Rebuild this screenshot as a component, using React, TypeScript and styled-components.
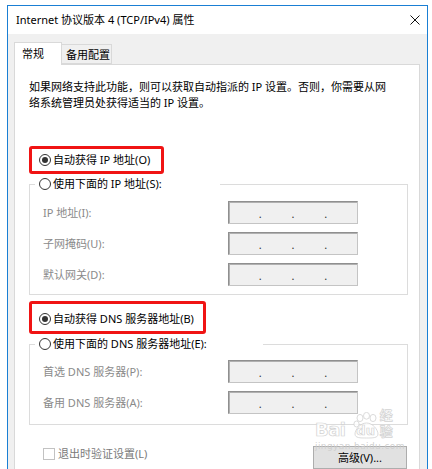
import React from "react";
import styled, { createGlobalStyle } from "styled-components";

const GlobalStyle = createGlobalStyle`
  html, body { margin: 0; padding: 0; overflow: hidden; background: #ffffff; }
  body {
    font-family: "Noto Sans", "Noto Sans CJK SC", sans-serif;
    font-size: 11px;
    color: #000;
  }
  #root { height: 469px; }
`;

const Window = styled.div`
  margin: 5px 0 0 7px;
  width: 421px;
  height: 464px;
  box-sizing: border-box;
  border: 1px solid #1a7fd4;
  border-bottom: none;
  display: flex;
  flex-direction: column;
`;

const TitleBar = styled.div`
  height: 28px;
  flex: none;
  background: #fff;
  display: flex;
  align-items: center;
  justify-content: space-between;
  padding: 0 7px 0 8px;
`;

const TitleText = styled.span`
  font-size: 11px;
  line-height: 16px;
  color: #000;
`;

const CloseIcon = styled.svg`
  width: 10px;
  height: 10px;
  display: block;
`;

const Body = styled.div`
  flex: 1;
  min-height: 0;
  background: #f0f0f0;
  padding: 8px 7px 0 6px;
  display: flex;
  flex-direction: column;
`;

const TabRow = styled.div`
  height: 22px;
  display: flex;
  align-items: flex-end;
`;

const Tab = styled.div<{ $active?: boolean }>`
  box-sizing: border-box;
  height: ${(p) => (p.$active ? "23px" : "20px")};
  margin-bottom: ${(p) => (p.$active ? "-1px" : "0")};
  margin-left: ${(p) => (p.$active ? "0" : "-1px")};
  width: ${(p) => (p.$active ? "48px" : "51px")};
  padding-left: ${(p) => (p.$active ? "7px" : "4px")};
  padding-top: ${(p) => (p.$active ? "3px" : "2px")};
  border: 1px solid #d9d9d9;
  border-bottom: ${(p) => (p.$active ? "none" : "1px solid #d9d9d9")};
  background: ${(p) => (p.$active ? "#ffffff" : "#f0f0f0")};
  position: relative;
  z-index: ${(p) => (p.$active ? 2 : 1)};
  line-height: 16px;
  font-size: 11px;
`;

const Panel = styled.div`
  flex: 1;
  position: relative;
  background: #fff;
  border: 1px solid #d9d9d9;
  border-bottom: none;
  padding: 14px 11px 0 14px;
  display: flex;
  flex-direction: column;
`;

const Description = styled.p`
  margin: 0;
  line-height: 16px;
  font-size: 11px;
`;

const RadioRow = styled.div<{ $mt: number; $boxW: number; $boxH: number; $boxTop: number }>`
  position: relative;
  margin-top: ${(p) => p.$mt}px;
  height: 16px;
  padding-left: 10px;
  display: flex;
  align-items: center;
  gap: 2px;
  line-height: 16px;
  &::after {
    content: "";
    position: absolute;
    left: 0;
    top: ${(p) => p.$boxTop}px;
    width: ${(p) => p.$boxW}px;
    height: ${(p) => p.$boxH}px;
    box-sizing: border-box;
    border: 3px solid #f01414;
    border-radius: 3px;
    pointer-events: none;
  }
`;

const Radio = styled.span<{ $checked?: boolean }>`
  width: 12px;
  height: 12px;
  box-sizing: border-box;
  border-radius: 50%;
  border: 1px solid #333;
  background: #fff;
  display: inline-flex;
  align-items: center;
  justify-content: center;
  flex: none;
  &::after {
    content: "";
    width: 6px;
    height: 6px;
    border-radius: 50%;
    background: ${(p) => (p.$checked ? "#333" : "transparent")};
  }
`;

const Group = styled.fieldset<{ $mt: number; $pt: number; $pb: number }>`
  margin: ${(p) => p.$mt}px 0 0 0;
  padding: ${(p) => p.$pt}px 0 ${(p) => p.$pb}px 0;
  border: 1px solid #dcdcdc;
  min-width: 0;
`;

const Legend = styled.legend<{ $w: number }>`
  margin-left: 5px;
  padding: 0 0 0 4px;
  width: ${(p) => p.$w}px;
  box-sizing: border-box;
  height: 16px;
  display: flex;
  align-items: center;
  gap: 2px;
  line-height: 16px;
  font-size: 11px;
`;

const FieldGrid = styled.div`
  display: grid;
  grid-template-columns: 185px 130px;
  row-gap: 8px;
  padding-left: 13px;
  align-items: center;
`;

const FieldLabel = styled.span`
  color: #8a8a8a;
  line-height: 16px;
`;

const IpBox = styled.div`
  width: 130px;
  height: 23px;
  box-sizing: border-box;
  background: #f0f0f0;
  border: 1px solid #c4c4c4;
  border-top-color: #8f8f8f;
  border-left-color: #8f8f8f;
  box-shadow: inset 1px 1px 0 #b0b0b0;
  display: grid;
  grid-template-columns: 1fr 3px 1fr 3px 1fr 3px 1fr;
  align-items: center;
`;

const IpDot = styled.span`
  font-size: 11px;
  line-height: 16px;
  color: #333;
  text-align: center;
  transform: translateY(1px);
`;

const BottomRow = styled.div`
  margin-top: 21px;
  padding: 0 1px 0 14px;
  display: flex;
  justify-content: space-between;
  align-items: flex-start;
`;

const CheckLabel = styled.label`
  display: flex;
  align-items: center;
  gap: 3px;
  height: 16px;
  line-height: 16px;
  color: #7a7a7a;
`;

const CheckBox = styled.span`
  width: 12px;
  height: 12px;
  box-sizing: border-box;
  border: 1px solid #c2c2c2;
  background: #fff;
  flex: none;
`;

const Button = styled.button`
  width: 94px;
  height: 23px;
  box-sizing: border-box;
  padding: 0;
  margin: 0;
  background: #e1e1e1;
  border: 1px solid #adadad;
  font-family: "Noto Sans", "Noto Sans CJK SC", sans-serif;
  font-size: 11px;
  line-height: 12px;
  color: #000;
`;

const Watermark = styled.div`
  position: absolute;
  left: 300px;
  top: 346px;
  width: 90px;
  pointer-events: none;
  display: flex;
  flex-direction: column;
  align-items: flex-start;
`;

const WmLine = styled.div`
  display: flex;
  align-items: flex-end;
  height: 28px;
  font-family: "DejaVu Sans", "Noto Sans CJK SC", sans-serif;
  font-weight: bold;
  color: rgba(255, 255, 255, 0.85);
  -webkit-text-stroke: 0.7px #d2d2d2;
`;

const WmBai = styled.span`
  font-size: 18px;
  line-height: 18px;
  letter-spacing: -0.5px;
`;

const WmPaw = styled.span`
  position: relative;
  width: 27px;
  height: 27px;
  margin-left: 7px;
  display: flex;
  align-items: flex-end;
  justify-content: center;
  font-size: 13px;
  line-height: 15px;
  svg {
    position: absolute;
    left: 0;
    top: 0;
  }
`;

const WmDu = styled.span`
  position: relative;
  padding-bottom: 1px;
`;

const WmCn = styled.span`
  font-family: "Noto Sans CJK SC", sans-serif;
  font-size: 13px;
  line-height: 16px;
  margin-left: 1px;
`;

const WmSub = styled.div`
  margin-top: 3px;
  font-family: "DejaVu Sans", sans-serif;
  font-size: 9px;
  line-height: 8px;
  letter-spacing: 0.4px;
  color: rgba(205, 205, 205, 0.95);
`;

const IpField = () => (
  <IpBox>
    <span />
    <IpDot>.</IpDot>
    <span />
    <IpDot>.</IpDot>
    <span />
    <IpDot>.</IpDot>
    <span />
  </IpBox>
);

export default function App() {
  return (
    <>
      <GlobalStyle />
      <Window>
        <TitleBar>
          <TitleText>Internet 协议版本 4 (TCP/IPv4) 属性</TitleText>
          <CloseIcon viewBox="0 0 10 10">
            <path d="M0.5 0.5 L9.5 9.5 M9.5 0.5 L0.5 9.5" stroke="#111" strokeWidth="1" fill="none" />
          </CloseIcon>
        </TitleBar>
        <Body>
          <TabRow>
            <Tab $active>常规</Tab>
            <Tab>备用配置</Tab>
          </TabRow>
          <Panel>
            <Description>
              如果网络支持此功能，则可以获取自动指派的 IP 设置。否则，你需要从网
              <br />
              络系统管理员处获得适当的 IP 设置。
            </Description>

            <RadioRow $mt={41} $boxW={135} $boxH={28} $boxTop={-6}>
              <Radio $checked />
              <span>自动获得 IP 地址(O)</span>
            </RadioRow>

            <Group $mt={8} $pt={9} $pb={8}>
              <Legend $w={185}>
                <Radio />
                <span>使用下面的 IP 地址(S):</span>
              </Legend>
              <FieldGrid>
                <FieldLabel>IP 地址(I):</FieldLabel>
                <IpField />
                <FieldLabel>子网掩码(U):</FieldLabel>
                <IpField />
                <FieldLabel>默认网关(D):</FieldLabel>
                <IpField />
              </FieldGrid>
            </Group>

            <RadioRow $mt={16} $boxW={177} $boxH={33} $boxTop={-10}>
              <Radio $checked />
              <span>自动获得 DNS 服务器地址(B)</span>
            </RadioRow>

            <Group $mt={9} $pt={8} $pb={10}>
              <Legend $w={228}>
                <Radio />
                <span>使用下面的 DNS 服务器地址(E):</span>
              </Legend>
              <FieldGrid>
                <FieldLabel>首选 DNS 服务器(P):</FieldLabel>
                <IpField />
                <FieldLabel>备用 DNS 服务器(A):</FieldLabel>
                <IpField />
              </FieldGrid>
            </Group>

            <BottomRow>
              <CheckLabel>
                <CheckBox />
                <span>退出时验证设置(L)</span>
              </CheckLabel>
              <Button>高级(V)...</Button>
            </BottomRow>

            <Watermark>
              <WmLine>
                <WmBai>Bai</WmBai>
                <WmPaw>
                  <svg width="27" height="27" viewBox="0 0 27 27">
                    <g fill="rgba(255,255,255,0.85)" stroke="#d2d2d2" strokeWidth="0.8">
                      <ellipse cx="7" cy="6" rx="3" ry="3.6" />
                      <ellipse cx="13.5" cy="3.8" rx="3" ry="3.4" />
                      <ellipse cx="20" cy="6" rx="3" ry="3.6" />
                      <ellipse cx="3.5" cy="12" rx="2.6" ry="3" />
                      <path d="M13.5 11 C20 11 25 18 25 22 C25 26 20 26 13.5 26 C7 26 2 26 2 22 C2 18 7 11 13.5 11 Z" />
                    </g>
                  </svg>
                  <WmDu>du</WmDu>
                </WmPaw>
                <WmCn>经验</WmCn>
              </WmLine>
              <WmSub>jingyan.baidu.com</WmSub>
            </Watermark>
          </Panel>
        </Body>
      </Window>
    </>
  );
}
